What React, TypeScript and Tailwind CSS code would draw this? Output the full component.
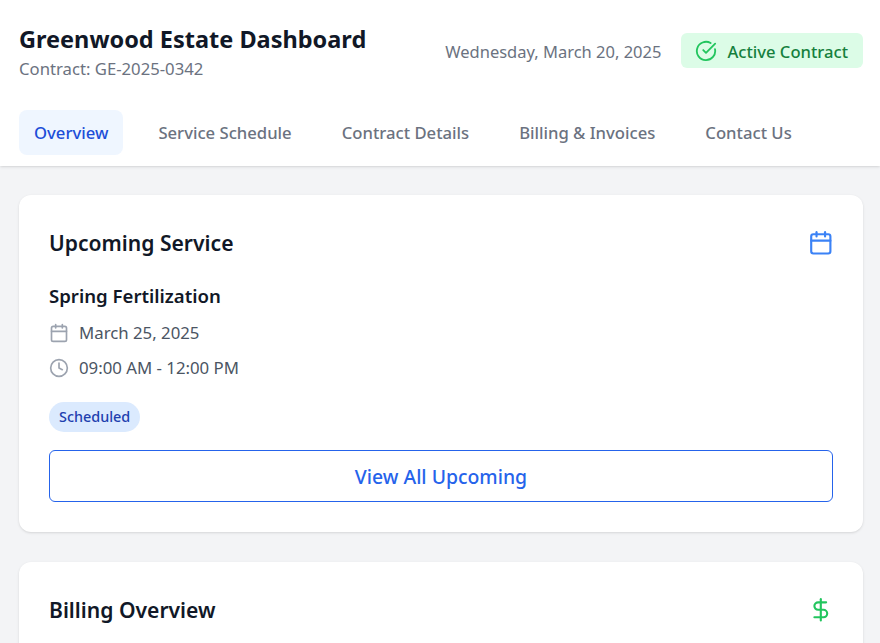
import { Calendar, CircleCheckBig, Clock, DollarSign } from "lucide-react";

const tabs = ["Overview", "Service Schedule", "Contract Details", "Billing & Invoices", "Contact Us"];

export default function App() {
  return (
    <div className="h-[643px] overflow-hidden bg-[#f3f4f6] font-['Noto_Sans',sans-serif] text-[#111827]">
      <header className="h-[166px] bg-white pr-[17px] pl-[19px] shadow-sm">
        <div className="flex h-[110px] items-center justify-between pb-[6px]">
          <div>
            <h1 className="text-[23.5px] leading-[32px] font-bold">Greenwood Estate Dashboard</h1>
            <p className="mt-[2px] text-[16.7px] leading-[24px] text-[#6b7280]">Contract: GE-2025-0342</p>
          </div>
          <div className="flex items-center gap-5">
            <span className="text-[16.5px] text-[#6b7280]">Wednesday, March 20, 2025</span>
            <div className="mb-[3px] flex h-[35px] items-center gap-[10px] rounded-md bg-[#dcfce7] pr-[15px] pl-[14px] text-[16.6px] font-medium text-[#15803d]">
              <CircleCheckBig className="h-[22px] w-[22px] text-[#22c55e]" />
              <span className="pt-[3px]">Active Contract</span>
            </div>
          </div>
        </div>
        <nav className="flex gap-5">
          {tabs.map((tab, i) => (
            <button
              key={tab}
              className={`h-[45px] rounded-lg px-[15px] pt-[2px] text-[16.66px] font-medium ${i === 0 ? "bg-[#eff6ff] text-[#1d4ed8]" : "text-[#6b7280]"}`}
            >
              {tab}
            </button>
          ))}
        </nav>
      </header>

      <main className="flex flex-col gap-[30px] pt-[29px] pr-[17px] pl-[19px]">
        <section className="rounded-xl bg-white p-[30px] shadow-sm">
          <div className="flex items-center justify-between">
            <h2 className="text-[21.1px] leading-[36px] font-semibold">Upcoming Service</h2>
            <Calendar className="-mr-px h-[25.6px] w-[25.6px] text-[#3b82f6]" />
          </div>
          <h3 className="mt-[22px] text-[18.6px] leading-[26px] font-semibold">Spring Fertilization</h3>
          <div className="mt-[12px] flex items-center gap-[10px] text-[16.8px] leading-[24px] text-[#4b5563]">
            <Calendar className="h-5 w-5 text-[#9ca3af]" />
            March 25, 2025
          </div>
          <div className="mt-[11px] flex items-center gap-[10px] text-[16.8px] leading-[24px] text-[#4b5563]">
            <Clock className="h-5 w-5 text-[#9ca3af]" />
            09:00 AM - 12:00 PM
          </div>
          <span className="mt-[22px] inline-block h-[30px] rounded-full bg-[#dbeafe] px-[10px] text-[14.4px] leading-[30px] font-medium text-[#1e40af]">
            Scheduled
          </span>
          <button className="mt-[18px] block h-[52px] w-full rounded-md border border-[#2563eb] pt-px text-[19.4px] font-medium text-[#2563eb]">
            View All Upcoming
          </button>
        </section>
        <section className="rounded-xl bg-white p-[30px] shadow-sm">
          <div className="flex items-center justify-between">
            <h2 className="text-[21.1px] leading-[36px] font-semibold">Billing Overview</h2>
            <DollarSign className="-mr-px h-[25.6px] w-[25.6px] text-[#22c55e]" />
          </div>
        </section>
      </main>
    </div>
  );
}
